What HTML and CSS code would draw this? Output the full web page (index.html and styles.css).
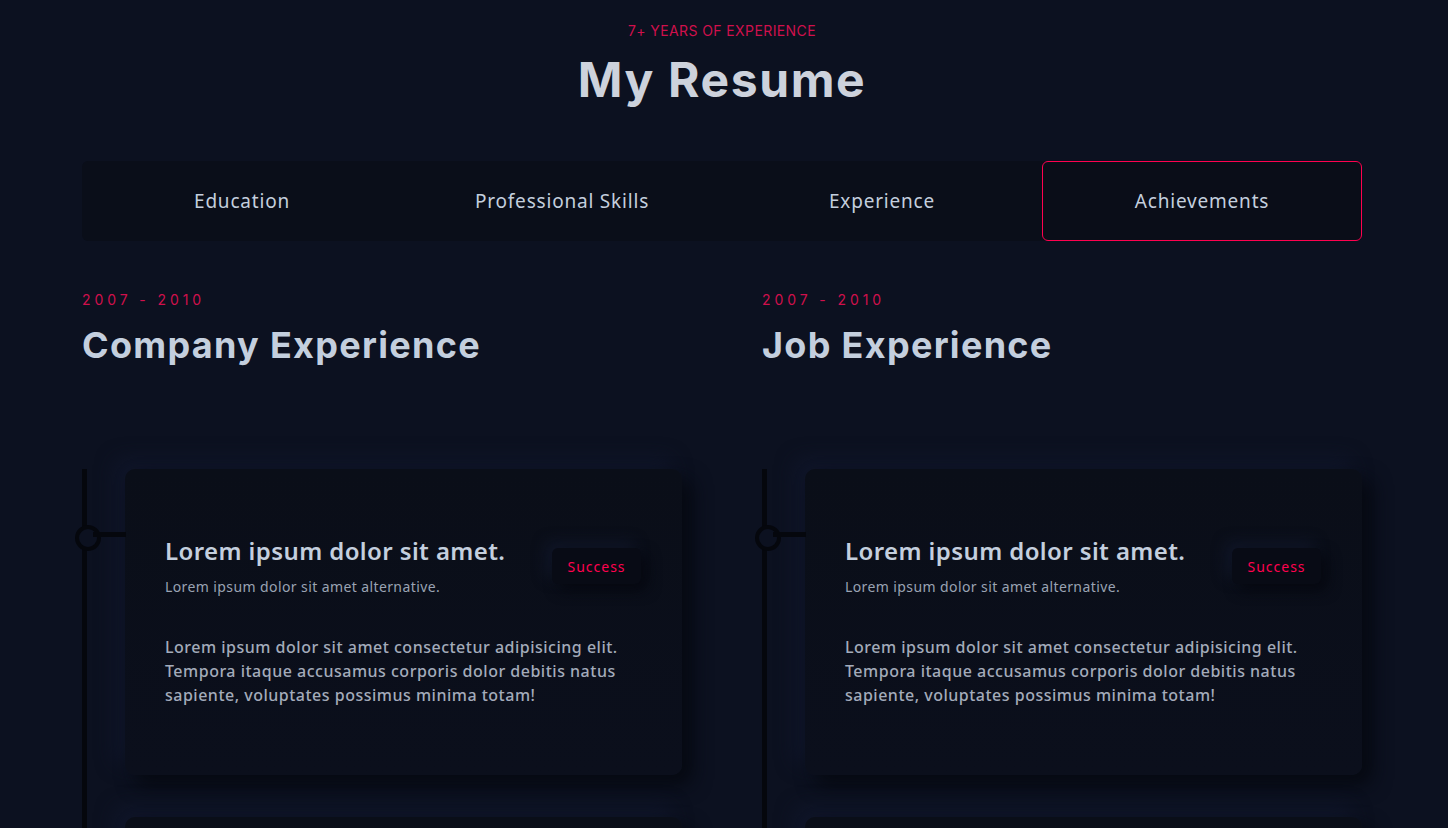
FILE: index.html
```html
<!DOCTYPE html>
<html lang="en">
<head>
<meta charset="utf-8">
<title>My Resume</title>
<link rel="stylesheet" href="styles.css">
</head>
<body>
<section class="resume">
  <header class="head">
    <span class="eyebrow">7+ YEARS OF EXPERIENCE</span>
    <h1 class="title">My Resume</h1>
  </header>
  <nav class="tabs">
    <button class="tab">Education</button>
    <button class="tab">Professional Skills</button>
    <button class="tab">Experience</button>
    <button class="tab active">Achievements</button>
  </nav>
  <div class="cols">
    <div class="col">
      <div class="col-head">
        <span class="years">2007 - 2010</span>
        <h2 class="col-title">Company Experience</h2>
      </div>
      <div class="timeline">
        <div class="item">
          <article class="card">
            <div class="card-top">
              <div>
                <h3 class="card-title">Lorem ipsum dolor sit amet.</h3>
                <p class="card-sub">Lorem ipsum dolor sit amet alternative.</p>
              </div>
              <span class="badge">Success</span>
            </div>
            <p class="card-text">Lorem ipsum dolor sit amet consectetur adipisicing elit. Tempora itaque accusamus corporis dolor debitis natus sapiente, voluptates possimus minima totam!</p>
          </article>
        </div>
        <div class="item">
          <article class="card">
            <div class="card-top">
              <div>
                <h3 class="card-title">Lorem ipsum dolor sit amet.</h3>
                <p class="card-sub">Lorem ipsum dolor sit amet alternative.</p>
              </div>
              <span class="badge">Success</span>
            </div>
            <p class="card-text">Lorem ipsum dolor sit amet consectetur adipisicing elit. Tempora itaque accusamus corporis dolor debitis natus sapiente, voluptates possimus minima totam!</p>
          </article>
        </div>
      </div>
    </div>
    <div class="col">
      <div class="col-head">
        <span class="years">2007 - 2010</span>
        <h2 class="col-title">Job Experience</h2>
      </div>
      <div class="timeline">
        <div class="item">
          <article class="card">
            <div class="card-top">
              <div>
                <h3 class="card-title">Lorem ipsum dolor sit amet.</h3>
                <p class="card-sub">Lorem ipsum dolor sit amet alternative.</p>
              </div>
              <span class="badge">Success</span>
            </div>
            <p class="card-text">Lorem ipsum dolor sit amet consectetur adipisicing elit. Tempora itaque accusamus corporis dolor debitis natus sapiente, voluptates possimus minima totam!</p>
          </article>
        </div>
        <div class="item">
          <article class="card">
            <div class="card-top">
              <div>
                <h3 class="card-title">Lorem ipsum dolor sit amet.</h3>
                <p class="card-sub">Lorem ipsum dolor sit amet alternative.</p>
              </div>
              <span class="badge">Success</span>
            </div>
            <p class="card-text">Lorem ipsum dolor sit amet consectetur adipisicing elit. Tempora itaque accusamus corporis dolor debitis natus sapiente, voluptates possimus minima totam!</p>
          </article>
        </div>
      </div>
    </div>
  </div>
</section>
</body>
</html>
```
FILE: styles.css
```css
* { box-sizing: border-box; }
html, body {
  margin: 0;
  padding: 0;
  background: #0c1120;
}
body {
  padding-right: 4px;
  font-family: "Inter", "Noto Sans", sans-serif;
  color: #c4cfde;
}
.resume {
  width: 1280px;
  margin: 0 auto;
  padding-top: 22px;
}
.head {
  display: flex;
  flex-direction: column;
  align-items: center;
}
.eyebrow {
  font-family: "Inter", sans-serif;
  font-size: 14px;
  color: #d0104c;
  line-height: 18px;
  letter-spacing: 0.4px;
}
.title {
  margin: 10px 0 0;
  font-size: 48px;
  line-height: 60px;
  font-weight: 700;
  color: #cdd2dc;
  letter-spacing: 1.6px;
}
.tabs {
  margin-top: 51px;
  display: grid;
  grid-template-columns: repeat(4, 1fr);
  background: #0a0e19;
  border-radius: 6px;
  height: 80px;
}
.tab {
  background: transparent;
  border: 1px solid transparent;
  border-radius: 6px;
  color: #c4cfde;
  font-family: "Noto Sans", sans-serif;
  font-size: 19px;
  letter-spacing: 0.8px;
  cursor: pointer;
}
.tab.active {
  border-color: #ff014f;
  background: #0a0d18;
}
.cols {
  display: grid;
  grid-template-columns: 600px 600px;
  gap: 80px;
  margin-top: 51px;
}
.col-head {
  display: flex;
  flex-direction: column;
}
.years {
  font-size: 14px;
  letter-spacing: 3.9px;
  color: #d0104c;
  line-height: 16px;
}
.col-title {
  margin: 14px 0 0;
  font-size: 36px;
  line-height: 46px;
  font-weight: 700;
  color: #c4cfde;
  letter-spacing: 1.3px;
}
.timeline {
  margin-top: 101px;
  border-left: 5px solid #05070d;
  display: flex;
  flex-direction: column;
  gap: 42px;
}
.item {
  position: relative;
  padding-left: 38px;
}
.item::before {
  content: "";
  position: absolute;
  left: -12px;
  top: 56px;
  width: 18px;
  height: 18px;
  border-radius: 50%;
  border: 4px solid #05070d;
  background: #0c1120;
}
.item::after {
  content: "";
  position: absolute;
  left: 6px;
  top: 63px;
  width: 33px;
  height: 5px;
  background: #05070d;
}
.card {
  background: linear-gradient(180deg, #0a0e18 0%, #0b0f1c 100%);
  border-radius: 10px;
  padding: 66px 40px 64px;
  box-shadow: 10px 10px 19px #060911, -10px -10px 19px #10162a;
  min-height: 306px;
}
.card-top {
  display: flex;
  justify-content: space-between;
  align-items: flex-start;
}
.card-title {
  margin: 0;
  font-family: "Noto Sans", sans-serif;
  font-size: 24px;
  font-weight: 600;
  line-height: 32px;
  letter-spacing: 0.4px;
  color: #c4cfde;
}
.card-sub {
  margin: 10px 0 0;
  font-family: "Noto Sans", sans-serif;
  font-size: 14px;
  letter-spacing: 0.4px;
  color: #9aa3b3;
  line-height: 20px;
}
.badge {
  margin-top: 13px;
  margin-right: 1px;
  width: 89px;
  height: 36px;
  display: flex;
  align-items: center;
  justify-content: center;
  font-family: "Noto Sans", sans-serif;
  font-size: 14px;
  letter-spacing: 1px;
  color: #ff014f;
  background: #080b15;
  border-radius: 6px;
  box-shadow: 6px 6px 14px #060810, -6px -6px 14px #111729;
}
.card-text {
  margin: 38px 0 0;
  font-family: "Noto Sans", sans-serif;
  font-size: 16px;
  font-weight: 500;
  line-height: 24px;
  letter-spacing: 0.5px;
  color: #a3abba;
}
```
